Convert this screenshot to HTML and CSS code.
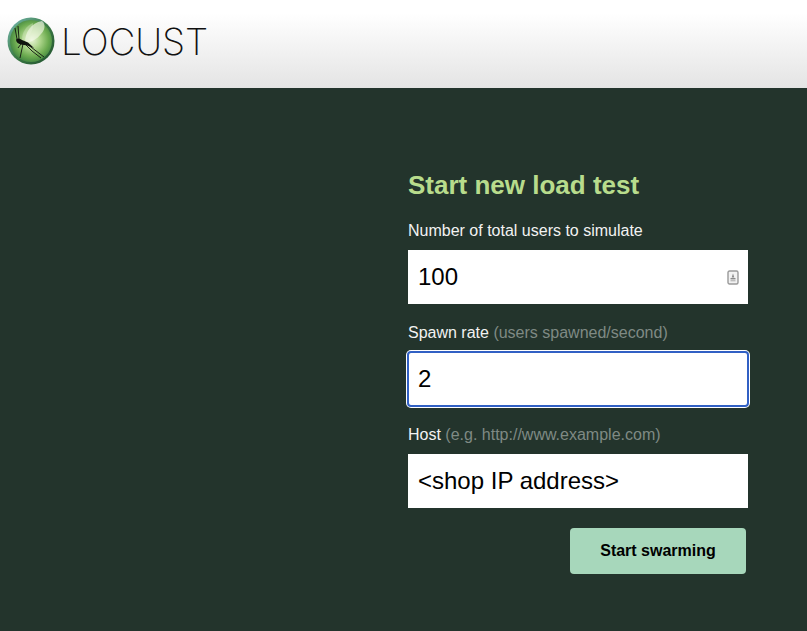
FILE: index.html
```html
<!DOCTYPE html>
<html lang="en">
<head>
    <meta charset="UTF-8">
    <title>Locust</title>
    <link rel="stylesheet" href="styles.css">
</head>
<body>
    <nav id="navbar">
        <svg class="logo" width="48" height="48" viewBox="0 0 48 48">
            <defs>
                <radialGradient id="ball" cx="52%" cy="48%" r="55%">
                    <stop offset="0" stop-color="#e6f3d4"/>
                    <stop offset="0.35" stop-color="#b0d78e"/>
                    <stop offset="0.72" stop-color="#6cab50"/>
                    <stop offset="1" stop-color="#3f8340"/>
                </radialGradient>
                <linearGradient id="rim" x1="0" y1="0" x2="1" y2="1">
                    <stop offset="0" stop-color="#79bdb8"/>
                    <stop offset="0.5" stop-color="#3b7a45"/>
                    <stop offset="1" stop-color="#1f4f2c"/>
                </linearGradient>
            </defs>
            <circle cx="24" cy="24" r="23.5" fill="url(#rim)"/>
            <circle cx="24" cy="24" r="21" fill="url(#ball)"/>
            <path d="M18 26C18 15 24 6 35 4C39 7 38 13 34 17C30 22 25 25 18 26Z" fill="#f4f9ea" opacity="0.65"/>
            <path d="M15 23C15 15 19 9 26 6C27 12 23 19 17 24Z" fill="#eef6e0" opacity="0.3"/>
            <path d="M9 22.500C11 21 13 21.500 15 23L21 25.500L27 31L20 28.500L14 27.500C11 27 9 25 9 22.500Z" fill="#10140f"/>
            <path d="M20 27L37 40M10 22L8 11M12 22L11 9M16 27L13 41M19 28L25 34L34 41M14 27L11 31" stroke="#10140f" stroke-width="0.9" fill="none"/>
        </svg>
        <span class="brand">LOCUST</span>
    </nav>

    <div id="start">
        <form id="swarm_form">
            <h2>Start new load test</h2>

            <label for="user_count">Number of total users to simulate</label>
            <div class="field">
                <input type="text" id="user_count" value="100">
                <svg class="contact_icon" width="12" height="15" viewBox="0 0 12 15">
                    <rect x="1" y="1" width="10" height="13" rx="1.500" fill="#f2f2f2" stroke="#9a9a9a" stroke-width="1.400"/>
                    <path d="M6 3.500L7.300 7.500H4.700Z" fill="#8a8a8a"/>
                    <rect x="3.500" y="8" width="5" height="1.400" fill="#8a8a8a"/>
                    <rect x="3.500" y="10" width="5" height="1.400" fill="#bdbdbd"/>
                </svg>
            </div>

            <label for="spawn_rate">Spawn rate <small>(users spawned/second)</small></label>
            <div class="field">
                <input type="text" id="spawn_rate" class="focused" value="2">
            </div>

            <label for="host">Host <small>(e.g. http://www.example.com)</small></label>
            <div class="field">
                <input type="text" id="host" value="&lt;shop IP address&gt;">
            </div>

            <div class="actions">
                <button type="button" id="swarm">Start swarming</button>
            </div>
        </form>
    </div>
</body>
</html>
```

FILE: styles.css
```css
*{
    margin: 0px;
    padding: 0px;
    box-sizing: border-box;
}
html,body{
    height: 100%;
}
body{
    background-color: #23342c;
    font-family: "Liberation Sans", Arial, sans-serif;
    overflow: hidden;
}
#navbar{
    width: 100%;
    height: 88px;
    background: linear-gradient(#ffffff 0%, #ffffff 15%, #e4e4e4 100%);
    display: flex;
    align-items: center;
    padding-left: 7px;
    padding-bottom: 6px;
}
.logo{
    flex-shrink: 0;
}
.brand{
    margin-left: 6px;
    font-family: Inter, sans-serif;
    font-weight: 200;
    font-size: 37px;
    letter-spacing: -0.1px;
    line-height: 1;
    color: #111111;
}
#start{
    padding-top: 83px;
    padding-left: 408px;
}
#swarm_form{
    width: 340px;
    display: flex;
    flex-direction: column;
}
h2{
    font-size: 26px;
    line-height: 28px;
    color: #b8dc8c;
    margin-bottom: 23px;
}
label{
    display: block;
    font-size: 16px;
    line-height: 17px;
    color: #f2f2f2;
    margin-bottom: 11px;
}
small{
    font-size: 16px;
    color: #7f8a84;
}
.field{
    position: relative;
    margin-bottom: 20px;
}
.field input{
    display: block;
    width: 100%;
    height: 54px;
    border: 0;
    outline: 0;
    background-color: #ffffff;
    padding-left: 10px;
    font-family: "Liberation Sans", Arial, sans-serif;
    font-size: 24px;
    color: #000000;
}
.field input.focused{
    border-radius: 3px;
    outline: 2px solid #3160c4;
    outline-offset: -1px;
    box-shadow: 0 0 0 2px #ffffff;
}
.contact_icon{
    position: absolute;
    top: 20px;
    right: 9px;
}
.actions{
    display: flex;
    justify-content: flex-end;
    padding-right: 2px;
}
#swarm{
    width: 176px;
    height: 46px;
    border: 0;
    border-radius: 4px;
    background-color: #a7d7bb;
    color: #000000;
    font-family: "Liberation Sans", Arial, sans-serif;
    font-size: 16px;
    font-weight: bold;
}
```
